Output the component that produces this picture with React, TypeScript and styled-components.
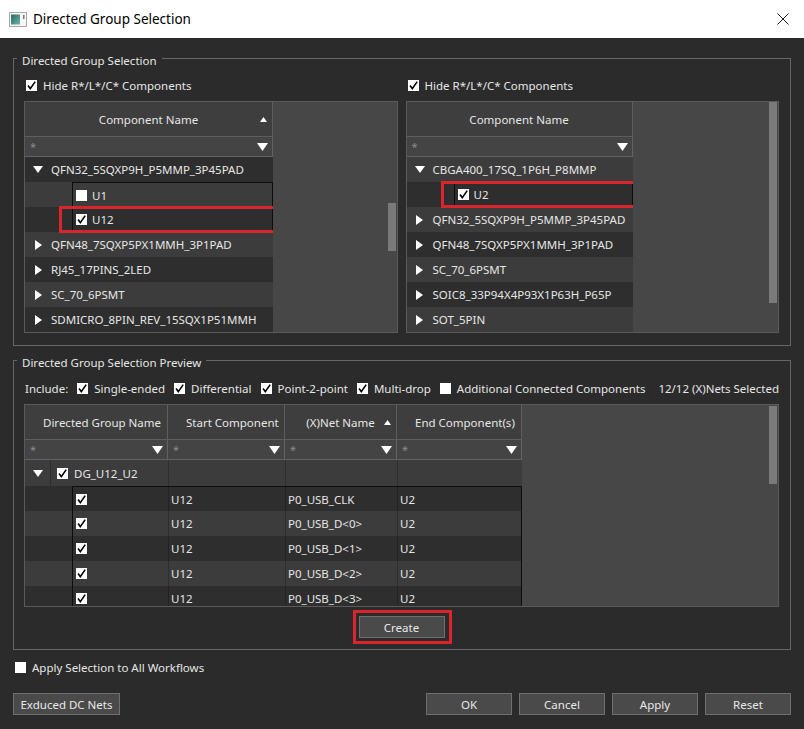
import styled, { createGlobalStyle, css } from 'styled-components'

const FONT = `'Noto Sans', 'Open Sans', 'DejaVu Sans', sans-serif`

const GlobalStyle = createGlobalStyle`
  html, body {
    margin: 0;
    padding: 0;
    background: #2b2b2b;
  }
  body {
    font-family: ${FONT};
    font-size: 11.5px;
    color: #e6e6e6;
  }
  * {
    box-sizing: border-box;
  }
`

const Window = styled.div`
  width: 804px;
  height: 729px;
  background: #2b2b2b;
  display: flex;
  flex-direction: column;
  overflow: hidden;
`

const TitleBar = styled.div`
  height: 38px;
  flex: none;
  background: #ffffff;
  display: flex;
  align-items: center;
  gap: 6px;
  padding: 0 15px 0 9px;
  color: #000;
  font-size: 13.5px;
`

const TitleText = styled.div`
  flex: 1;
`

const Body = styled.div`
  flex: 1;
  display: flex;
  flex-direction: column;
  padding: 9px 13px 0 13px;
`

const GroupBox = styled.fieldset<{ $gap?: number }>`
  margin: ${(p) => p.$gap ?? 0}px 0 0 0;
  padding: 0 11px ${(p) => (p.$gap ? 11 : 12)}px 10px;
  border: 1px solid #666666;
  min-width: 0;
`

const GroupLegend = styled.legend`
  margin-left: -7px;
  padding: 6px 5px 0 5px;
  height: 22px;
  line-height: 16px;
`

const TreePair = styled.div`
  display: grid;
  grid-template-columns: 1fr 1fr;
  column-gap: 8px;
  margin-top: 8px;
`

const Pane = styled.div`
  display: flex;
  flex-direction: column;
  gap: 8px;
  min-width: 0;
`

const CheckLine = styled.label`
  display: flex;
  align-items: center;
  gap: 6px;
  height: 16px;
  padding-left: 2px;
  white-space: nowrap;
`

const Box = styled.span`
  width: 11px;
  height: 11px;
  flex: none;
  background: #ffffff;
  display: inline-flex;
  align-items: center;
  justify-content: center;
`

const Check = ({ on }: { on: boolean }) => (
  <Box>
    {on && (
      <svg width="11" height="11" viewBox="0 0 11 11">
        <path d="M2 5.6 L4.3 8.6 L9.2 1.6" stroke="#000" strokeWidth="1.6" fill="none" />
      </svg>
    )}
  </Box>
)

const Frame = styled.div<{ $h: number }>`
  display: flex;
  height: ${(p) => p.$h}px;
  border: 1px solid #5a5a5a;
  background: #474747;
  overflow: hidden;
`

const Columns = styled.div<{ $w: number }>`
  width: ${(p) => p.$w}px;
  flex: none;
  display: flex;
  flex-direction: column;
  overflow: hidden;
`

const Filler = styled.div`
  flex: 1;
`

const ScrollTrack = styled.div`
  width: 8px;
  flex: none;
  margin-right: 1px;
`

const ScrollThumb = styled.div<{ $top: number; $h: number }>`
  margin-top: ${(p) => p.$top}px;
  height: ${(p) => p.$h}px;
  background: #7a7a7a;
`

const HeadCell = styled.div`
  height: 35px;
  flex: none;
  display: grid;
  grid-template-columns: 18px 1fr 18px;
  align-items: center;
  text-align: center;
  background: #3e3e3e;
  border-right: 1px solid #5e5e5e;
  border-bottom: 1px solid #5e5e5e;
  white-space: nowrap;
`

const SortMark = styled.span`
  display: flex;
  justify-content: center;
`

const FilterCell = styled.div`
  height: 20px;
  flex: none;
  display: flex;
  align-items: center;
  justify-content: space-between;
  padding: 0 4px 0 5px;
  background: #444444;
  border-right: 1px solid #626262;
  border-bottom: 1px solid #626262;
  color: #8c8c8c;
  font-size: 11px;
`

const rowBg = (light: boolean) => (light ? '#3c3c3c' : '#2e2e2e')

const marked = css`
  &::after {
    content: '';
    position: absolute;
    top: -1px;
    bottom: -1px;
    left: 34px;
    right: -3px;
    border: 3px solid #d9252b;
    pointer-events: none;
    z-index: 2;
  }
`

const TreeRow = styled.div<{ $light: boolean; $marked?: boolean }>`
  position: relative;
  height: 25px;
  flex: none;
  display: flex;
  align-items: center;
  background: ${(p) => rowBg(p.$light)};
  white-space: nowrap;
  ${(p) => p.$marked && marked}
`

const Branch = styled.span<{ $divider?: boolean }>`
  width: 26px;
  flex: none;
  align-self: stretch;
  display: flex;
  align-items: center;
  justify-content: center;
  border-right: ${(p) => (p.$divider ? '1px solid rgba(0,0,0,0.22)' : 'none')};
`

const Indent = styled.span`
  width: 47px;
  flex: none;
  align-self: stretch;
`

const ChildCell = styled.span<{ $first?: boolean; $last?: boolean }>`
  flex: 1;
  align-self: stretch;
  display: flex;
  align-items: center;
  gap: 5px;
  padding-left: 3px;
  border-left: 1px solid #0d0d0d;
  border-right: 1px solid #0d0d0d;
  border-top: ${(p) => (p.$first ? '1px solid #0d0d0d' : 'none')};
  border-bottom: ${(p) => (p.$last ? '1px solid #0d0d0d' : 'none')};
`

const IncludeRow = styled.div`
  display: flex;
  align-items: center;
  height: 16px;
  margin-top: 9px;
  padding-left: 1px;
  gap: 9px;
  white-space: nowrap;
`

const CheckItem = styled.span`
  display: flex;
  align-items: center;
  gap: 6px;
`

const Counter = styled.span`
  margin-left: auto;
`

const TableWrap = styled.div`
  margin-top: 8px;
`

const GRID = '143px 117px 112px 125px'

const HeadGrid = styled.div`
  display: grid;
  grid-template-columns: ${GRID};
  flex: none;
`

const GroupRow = styled.div<{ $light: boolean }>`
  display: grid;
  grid-template-columns: ${GRID};
  height: 26px;
  flex: none;
  background: ${(p) => rowBg(p.$light)};
`

const GroupFirst = styled.div`
  display: flex;
  align-items: center;
  gap: 6px;
  white-space: nowrap;
`

const EmptyCell = styled.div`
  border-left: 1px solid rgba(0, 0, 0, 0.22);
`

const DataRow = styled.div<{ $light: boolean }>`
  display: grid;
  grid-template-columns: 47px 1fr;
  height: 25px;
  flex: none;
  background: ${(p) => rowBg(p.$light)};
`

const Framed = styled.div<{ $first?: boolean }>`
  display: grid;
  grid-template-columns: 95px 117px 112px 124px;
  border-left: 1px solid #0d0d0d;
  border-right: 1px solid #0d0d0d;
  border-top: ${(p) => (p.$first ? '1px solid #0d0d0d' : 'none')};
`

const DataCell = styled.div<{ $sep?: boolean }>`
  display: flex;
  align-items: center;
  padding-left: ${(p) => (p.$sep ? 2 : 3)}px;
  border-left: ${(p) => (p.$sep ? '1px solid rgba(0,0,0,0.22)' : 'none')};
  white-space: nowrap;
`

const CreateRow = styled.div`
  display: flex;
  justify-content: center;
  margin-top: 9px;
`

const Button = styled.button<{ $w?: number; $marked?: boolean }>`
  position: relative;
  width: ${(p) => p.$w ?? 86}px;
  height: 22px;
  padding: 0;
  background: #4a4a4a;
  border: 1px solid #6f6f6f;
  color: #e8e8e8;
  font-family: ${FONT};
  font-size: 11.5px;
  ${(p) =>
    p.$marked &&
    css`
      &::after {
        content: '';
        position: absolute;
        inset: -7px -8px -7px -7px;
        border: 3px solid #d9252b;
      }
    `}
`

const ApplyRow = styled(CheckLine)`
  margin-top: 9px;
`

const Footer = styled.div`
  display: flex;
  gap: 7px;
  margin-top: 18px;
`

const Down = ({ w = 10, h = 7 }: { w?: number; h?: number }) => (
  <svg width={w} height={h} viewBox={`0 0 ${w} ${h}`}>
    <polygon points={`0,0 ${w},0 ${w / 2},${h}`} fill="#fff" />
  </svg>
)

const Right = () => (
  <svg width="7" height="10" viewBox="0 0 7 10">
    <polygon points="0,0 7,5 0,10" fill="#fff" />
  </svg>
)

const Up = () => (
  <svg width="7" height="5" viewBox="0 0 7 5">
    <polygon points="0,5 7,5 3.5,0" fill="#fff" />
  </svg>
)

type Node =
  | { kind: 'group'; label: string; open?: boolean }
  | { kind: 'child'; label: string; on: boolean; first?: boolean; last?: boolean; mark?: boolean }

const leftNodes: Node[] = [
  { kind: 'group', label: 'QFN32_5SQXP9H_P5MMP_3P45PAD', open: true },
  { kind: 'child', label: 'U1', on: false, first: true },
  { kind: 'child', label: 'U12', on: true, last: true, mark: true },
  { kind: 'group', label: 'QFN48_7SQXP5PX1MMH_3P1PAD' },
  { kind: 'group', label: 'RJ45_17PINS_2LED' },
  { kind: 'group', label: 'SC_70_6PSMT' },
  { kind: 'group', label: 'SDMICRO_8PIN_REV_15SQX1P51MMH' },
]

const rightNodes: Node[] = [
  { kind: 'group', label: 'CBGA400_17SQ_1P6H_P8MMP', open: true },
  { kind: 'child', label: 'U2', on: true, first: true, last: true, mark: true },
  { kind: 'group', label: 'QFN32_5SQXP9H_P5MMP_3P45PAD' },
  { kind: 'group', label: 'QFN48_7SQXP5PX1MMH_3P1PAD' },
  { kind: 'group', label: 'SC_70_6PSMT' },
  { kind: 'group', label: 'SOIC8_33P94X4P93X1P63H_P65P' },
  { kind: 'group', label: 'SOT_5PIN' },
]

const nets = ['P0_USB_CLK', 'P0_USB_D<0>', 'P0_USB_D<1>', 'P0_USB_D<2>', 'P0_USB_D<3>']

const ComponentTree = ({
  nodes,
  colWidth,
  sorted,
  firstLight,
  thumb,
}: {
  nodes: Node[]
  colWidth: number
  sorted?: boolean
  firstLight: boolean
  thumb: [number, number]
}) => (
  <Frame $h={232}>
    <Columns $w={colWidth}>
      <HeadCell>
        <span />
        <span>Component Name</span>
        <SortMark>{sorted && <Up />}</SortMark>
      </HeadCell>
      <FilterCell>
        <span>*</span>
        <Down w={11} h={8} />
      </FilterCell>
      {nodes.map((n, i) => {
        const light = i % 2 === 0 ? firstLight : !firstLight
        if (n.kind === 'group')
          return (
            <TreeRow key={i} $light={light}>
              <Branch>{n.open ? <Down /> : <Right />}</Branch>
              <span>{n.label}</span>
            </TreeRow>
          )
        return (
          <TreeRow key={i} $light={light} $marked={n.mark}>
            <Indent />
            <ChildCell $first={n.first} $last={n.last}>
              <Check on={n.on} />
              <span>{n.label}</span>
            </ChildCell>
          </TreeRow>
        )
      })}
    </Columns>
    <Filler />
    <ScrollTrack>
      <ScrollThumb $top={thumb[0]} $h={thumb[1]} />
    </ScrollTrack>
  </Frame>
)

const AppIcon = () => (
  <svg width="18" height="15" viewBox="0 0 18 15">
    <defs>
      <linearGradient id="teal" x1="0" y1="0" x2="1" y2="1">
        <stop offset="0" stopColor="#2b6a62" />
        <stop offset="1" stopColor="#6fb3a6" />
      </linearGradient>
    </defs>
    <rect x="0.5" y="0.5" width="17" height="14" fill="#f6f6f6" stroke="#a8a8a8" />
    <rect x="2" y="2.5" width="9" height="10" fill="url(#teal)" />
    <rect x="14" y="3" width="1.5" height="4" fill="#777" />
  </svg>
)

const CloseIcon = () => (
  <svg width="12" height="12" viewBox="0 0 12 12">
    <path d="M0.5 0.5 L11.5 11.5 M11.5 0.5 L0.5 11.5" stroke="#1a1a1a" strokeWidth="1" />
  </svg>
)

export default function App() {
  return (
    <Window>
      <GlobalStyle />
      <TitleBar>
        <AppIcon />
        <TitleText>Directed Group Selection</TitleText>
        <CloseIcon />
      </TitleBar>
      <Body>
        <GroupBox>
          <GroupLegend>Directed Group Selection</GroupLegend>
          <TreePair>
            <Pane>
              <CheckLine>
                <Check on />
                Hide R*/L*/C* Components
              </CheckLine>
              <ComponentTree nodes={leftNodes} colWidth={248} sorted firstLight={false} thumb={[101, 48]} />
            </Pane>
            <Pane>
              <CheckLine>
                <Check on />
                Hide R*/L*/C* Components
              </CheckLine>
              <ComponentTree nodes={rightNodes} colWidth={226} firstLight thumb={[0, 201]} />
            </Pane>
          </TreePair>
        </GroupBox>

        <GroupBox $gap={3}>
          <GroupLegend>Directed Group Selection Preview</GroupLegend>
          <IncludeRow>
            <span>Include:</span>
            <CheckItem>
              <Check on />
              Single-ended
            </CheckItem>
            <CheckItem>
              <Check on />
              Differential
            </CheckItem>
            <CheckItem>
              <Check on />
              Point-2-point
            </CheckItem>
            <CheckItem>
              <Check on />
              Multi-drop
            </CheckItem>
            <CheckItem>
              <Check on={false} />
              Additional Connected Components
            </CheckItem>
            <Counter>12/12 (X)Nets Selected</Counter>
          </IncludeRow>
          <TableWrap>
            <Frame $h={203}>
              <Columns $w={497}>
                <HeadGrid>
                  <HeadCell>
                    <span />
                    <span>Directed Group Name</span>
                    <span />
                  </HeadCell>
                  <HeadCell>
                    <span />
                    <span>Start Component</span>
                    <span />
                  </HeadCell>
                  <HeadCell>
                    <span />
                    <span>(X)Net Name</span>
                    <SortMark>
                      <Up />
                    </SortMark>
                  </HeadCell>
                  <HeadCell>
                    <span />
                    <span>End Component(s)</span>
                    <span />
                  </HeadCell>
                </HeadGrid>
                <HeadGrid>
                  {[0, 1, 2, 3].map((i) => (
                    <FilterCell key={i}>
                      <span>*</span>
                      <Down w={11} h={8} />
                    </FilterCell>
                  ))}
                </HeadGrid>
                <GroupRow $light>
                  <GroupFirst>
                    <Branch $divider>
                      <Down />
                    </Branch>
                    <Check on />
                    <span>DG_U12_U2</span>
                  </GroupFirst>
                  <EmptyCell />
                  <EmptyCell />
                  <EmptyCell />
                </GroupRow>
                {nets.map((net, i) => (
                  <DataRow key={net} $light={i % 2 === 1}>
                    <span />
                    <Framed $first={i === 0}>
                      <DataCell>
                        <Check on />
                      </DataCell>
                      <DataCell $sep>U12</DataCell>
                      <DataCell $sep>{net}</DataCell>
                      <DataCell $sep>U2</DataCell>
                    </Framed>
                  </DataRow>
                ))}
              </Columns>
              <Filler />
              <ScrollTrack>
                <ScrollThumb $top={1} $h={78} />
              </ScrollTrack>
            </Frame>
          </TableWrap>
          <CreateRow>
            <Button $marked>Create</Button>
          </CreateRow>
        </GroupBox>

        <ApplyRow>
          <Check on={false} />
          Apply Selection to All Workflows
        </ApplyRow>

        <Footer>
          <Button $w={107}>Exduced DC Nets</Button>
          <Filler />
          <Button>OK</Button>
          <Button>Cancel</Button>
          <Button>Apply</Button>
          <Button>Reset</Button>
        </Footer>
      </Body>
    </Window>
  )
}
